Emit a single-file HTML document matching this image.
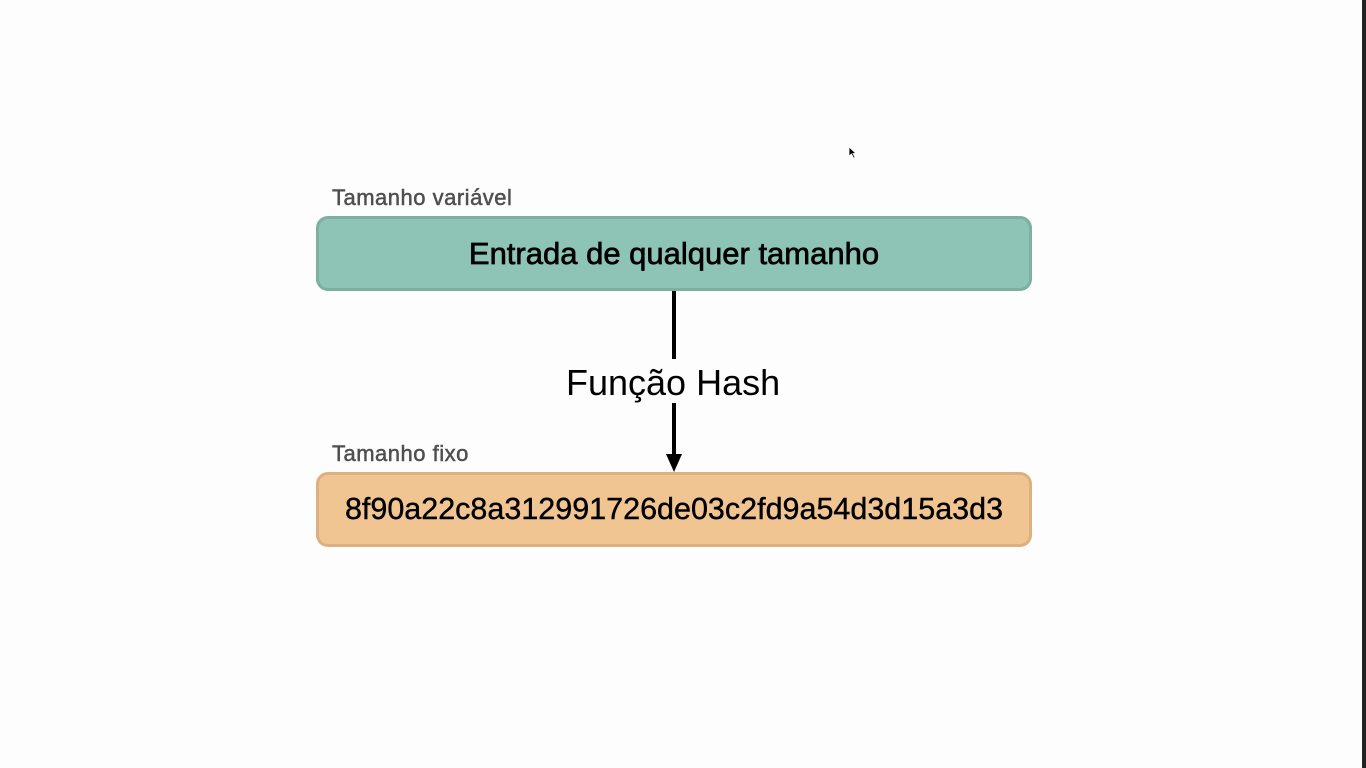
<!DOCTYPE html>
<html><head><meta charset="utf-8"><style>
html,body{margin:0;padding:0;background:#fdfdfd;width:1366px;height:768px;overflow:hidden;position:relative;font-family:"Liberation Sans",Arial,sans-serif}
.strip{position:absolute;left:1362px;top:0;width:4px;height:768px;background:#1f2321}
.lbl{position:absolute;left:332px;font-size:22px;letter-spacing:0.5px;color:#4f4f4f;-webkit-text-stroke:0.5px #4f4f4f;white-space:nowrap}
.box{position:absolute;left:316px;width:710px;height:69px;border-radius:12px;border:3px solid;display:flex;align-items:center;justify-content:center;color:#000;white-space:nowrap}
.b1{top:216px;background:#8dc4b5;border-color:#7eaf9f;font-size:31px;-webkit-text-stroke:0.7px #000}
.b2{top:472px;background:#f0c591;border-color:#dab280;font-size:30.5px;-webkit-text-stroke:0.4px #000}
.line{position:absolute;left:672px;width:4px;background:#000}
.fh{position:absolute;left:566px;top:362px;font-size:36px;color:#000;white-space:nowrap}
.cur{position:absolute;left:848px;top:146px}
</style></head><body>
<div class="strip"></div>
<div class="lbl" style="top:185px">Tamanho variável</div>
<div class="box b1">Entrada de qualquer tamanho</div>
<div class="line" style="top:291px;height:68px"></div>
<div class="fh">Função Hash</div>
<div class="line" style="top:403px;height:54px"></div>
<svg style="position:absolute;left:664px;top:454px" width="20" height="19"><polygon points="2,0 18,0 10,18" fill="#000"/></svg>
<div class="lbl" style="top:441px">Tamanho fixo</div>
<div class="box b2">8f90a22c8a312991726de03c2fd9a54d3d15a3d3</div>
<svg class="cur" width="10" height="14"><polygon points="1,1 1,10 3.5,8 5.5,12 7,11.3 5,7.5 8,7.5" fill="#000" stroke="#fff" stroke-width="0.8"/></svg>
</body></html>
